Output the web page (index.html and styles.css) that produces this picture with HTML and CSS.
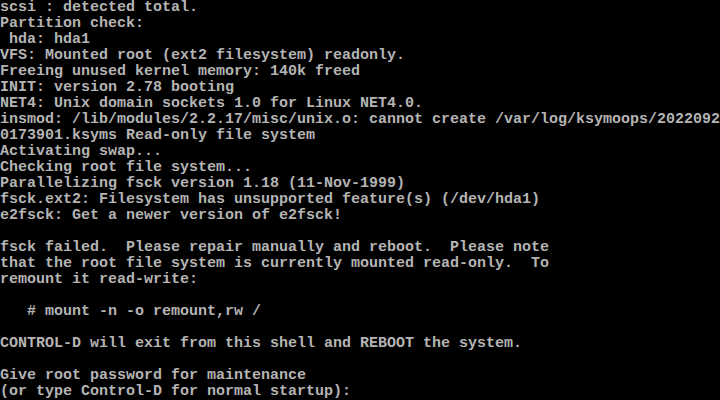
FILE: index.html
```html
<!DOCTYPE html>
<html lang="en">
<head>
<meta charset="utf-8">
<title>Console</title>
<link rel="stylesheet" href="styles.css">
</head>
<body>
<pre class="console">scsi : detected total.
Partition check:
 hda: hda1
VFS: Mounted root (ext2 filesystem) readonly.
Freeing unused kernel memory: 140k freed
INIT: version 2.78 booting
NET4: Unix domain sockets 1.0 for Linux NET4.0.
insmod: /lib/modules/2.2.17/misc/unix.o: cannot create /var/log/ksymoops/2022092
0173901.ksyms Read-only file system
Activating swap...
Checking root file system...
Parallelizing fsck version 1.18 (11-Nov-1999)
fsck.ext2: Filesystem has unsupported feature(s) (/dev/hda1)
e2fsck: Get a newer version of e2fsck!

fsck failed.  Please repair manually and reboot.  Please note
that the root file system is currently mounted read-only.  To
remount it read-write:

   # mount -n -o remount,rw /

CONTROL-D will exit from this shell and REBOOT the system.

Give root password for maintenance
(or type Control-D for normal startup):</pre>
</body>
</html>
```
FILE: styles.css
```css
html, body {
  margin: 0;
  padding: 0;
  background: #000;
  width: 720px;
  height: 400px;
  overflow: hidden;
}

.console {
  margin: 0;
  padding: 0;
  font-family: "Liberation Mono", monospace;
  font-size: 15px;
  font-weight: bold;
  line-height: 16px;
  color: #b4b4b4;
  white-space: pre;
}
```
